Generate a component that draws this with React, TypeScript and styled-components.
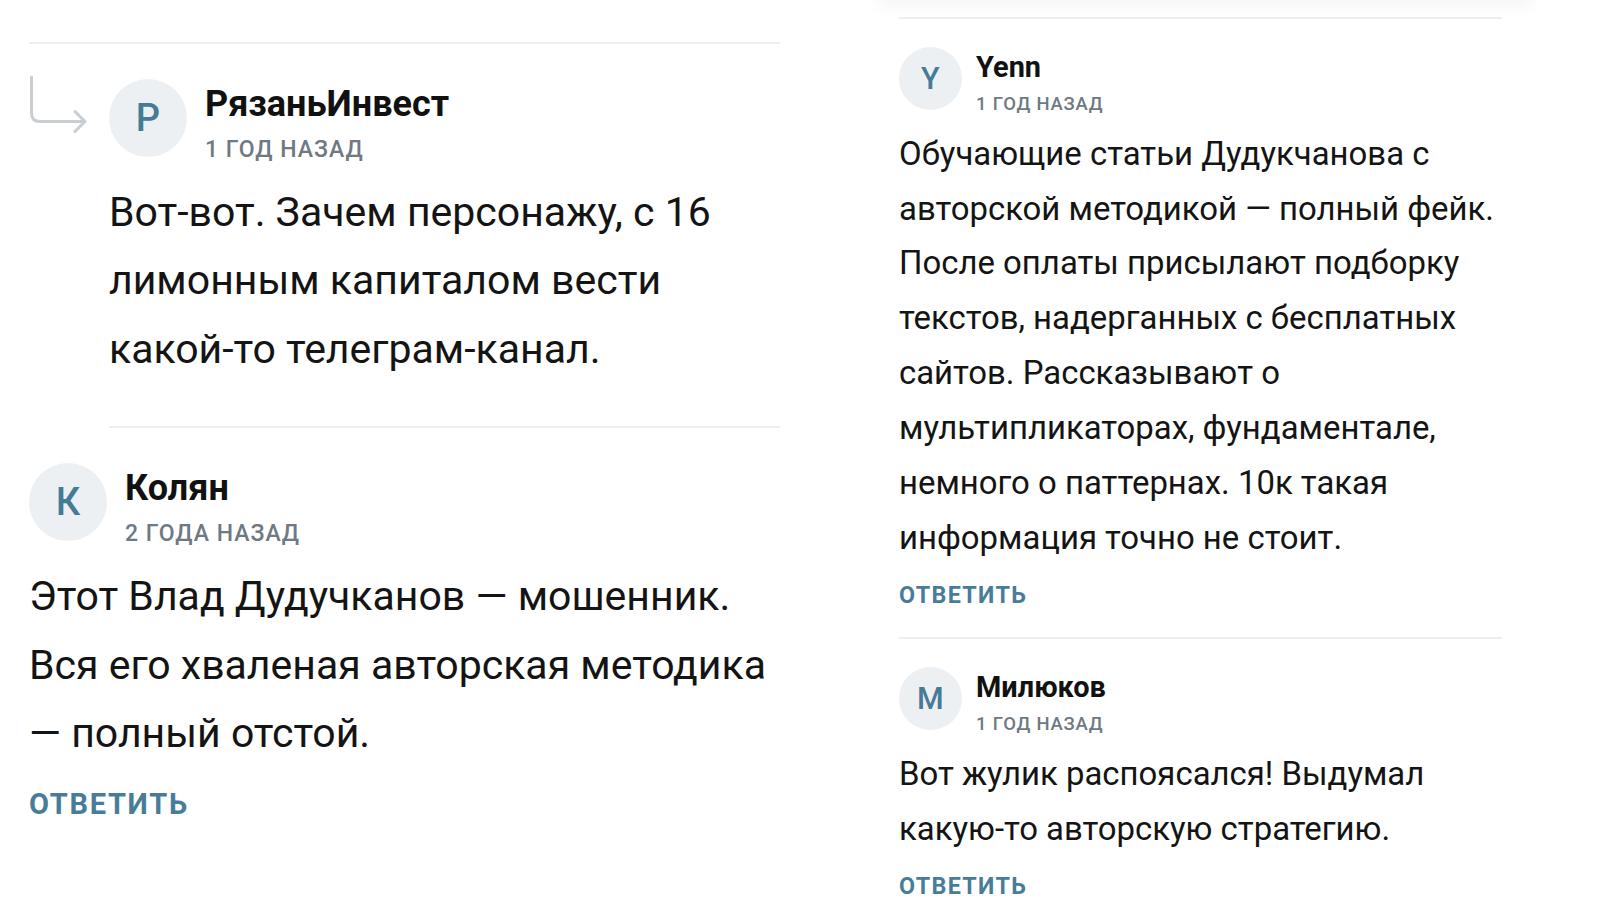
import React from "react";
import styled, { createGlobalStyle } from "styled-components";

const Global = createGlobalStyle`
  html, body { margin: 0; padding: 0; background: #ffffff; }
  body {
    font-family: Roboto, "Noto Sans", "Liberation Sans", sans-serif;
    color: #141414;
    -webkit-font-smoothing: antialiased;
  }
`;

const Page = styled.main`
  display: grid;
  grid-template-columns: 751px 603px;
  column-gap: 119px;
  padding-left: 29px;
  height: 900px;
  overflow: hidden;
`;

const Column = styled.section<{ $s: number; $top: number }>`
  --s: ${(p) => p.$s};
  display: flex;
  flex-direction: column;
  padding-top: ${(p) => p.$top}px;
  position: relative;
`;

const CardEdge = styled.div`
  position: absolute;
  left: -20px;
  right: -28px;
  top: -12px;
  height: 12px;
  background: #ffffff;
  box-shadow: 0 4px 16px rgba(40, 60, 80, 0.07);
`;

const Divider = styled.hr<{ $indent?: boolean }>`
  border: 0;
  margin: 0 0 0 ${(p) => (p.$indent ? "calc(80px * var(--s))" : "0")};
  height: 2px;
  background: #eceef1;
`;

const Comment = styled.article<{ $reply?: boolean }>`
  display: grid;
  grid-template-columns: ${(p) => (p.$reply ? "calc(80px * var(--s)) 1fr" : "1fr")};
  padding-top: calc(35px * var(--s));
  padding-bottom: calc(34px * var(--s));
`;

const ReplyArrow = styled.svg`
  width: calc(60px * var(--s));
  height: calc(60px * var(--s));
  margin-top: calc(-4px * var(--s));
`;

const Content = styled.div`
  display: flex;
  flex-direction: column;
  min-width: 0;
`;

const Header = styled.header`
  display: flex;
  align-items: flex-start;
  gap: calc(18px * var(--s));
`;

const Avatar = styled.div`
  flex: none;
  width: calc(78px * var(--s));
  height: calc(78px * var(--s));
  border-radius: 50%;
  background: #edf0f3;
  color: #467b96;
  display: flex;
  align-items: center;
  justify-content: center;
  font-size: calc(38px * var(--s));
  font-weight: 500;
`;

const Meta = styled.div`
  display: flex;
  flex-direction: column;
  padding-top: calc(3px * var(--s));
`;

const Name = styled.span`
  font-size: calc(36px * var(--s));
  line-height: calc(44px * var(--s));
  font-weight: 700;
  color: #111111;
`;

const Time = styled.span`
  margin-top: calc(9px * var(--s));
  font-size: calc(23px * var(--s));
  line-height: calc(30px * var(--s));
  font-weight: 500;
  letter-spacing: calc(1px * var(--s));
  text-transform: uppercase;
  color: #6e7982;
`;

const Body = styled.p`
  margin: calc(13px * var(--s)) 0 calc(9px * var(--s));
  font-size: calc(41px * var(--s));
  line-height: calc(68.4px * var(--s));
  font-weight: 400;
  color: #141414;
`;

const ReplyButton = styled.button`
  align-self: flex-start;
  margin-top: calc(10px * var(--s));
  padding: 0;
  border: 0;
  background: none;
  font-family: inherit;
  font-size: calc(29px * var(--s));
  line-height: calc(36px * var(--s));
  font-weight: 700;
  letter-spacing: calc(1.7px * var(--s));
  text-transform: uppercase;
  color: #477d99;
  cursor: pointer;
`;

type Item = {
  initial: string;
  name: string;
  time: string;
  text: string;
  reply?: boolean;
  canReply?: boolean;
};

const CommentView = ({ item }: { item: Item }) => (
  <Comment $reply={item.reply}>
    {item.reply && (
      <ReplyArrow viewBox="0 0 60 60" fill="none">
        <path
          d="M2.5 2 V38 Q2.5 46.5 11 46.5 H56 M46 36.5 L56 46.5 L46 56.5"
          stroke="#c9ced3"
          strokeWidth="3"
          strokeLinecap="round"
          strokeLinejoin="round"
        />
      </ReplyArrow>
    )}
    <Content>
      <Header>
        <Avatar>{item.initial}</Avatar>
        <Meta>
          <Name>{item.name}</Name>
          <Time>{item.time}</Time>
        </Meta>
      </Header>
      <Body>{item.text}</Body>
      {item.canReply && <ReplyButton type="button">Ответить</ReplyButton>}
    </Content>
  </Comment>
);

const left: Item[] = [
  {
    initial: "P",
    name: "РязаньИнвест",
    time: "1 год назад",
    text: "Вот-вот. Зачем персонажу, с 16 лимонным капиталом вести какой-то телеграм-канал.",
    reply: true,
  },
  {
    initial: "К",
    name: "Колян",
    time: "2 года назад",
    text: "Этот Влад Дудучканов — мошенник. Вся его хваленая авторская методика — полный отстой.",
    canReply: true,
  },
];

const right: Item[] = [
  {
    initial: "Y",
    name: "Yenn",
    time: "1 год назад",
    text: "Обучающие статьи Дудукчанова с авторской методикой — полный фейк. После оплаты присылают подборку текстов, надерганных с бесплатных сайтов. Рассказывают о мультипликаторах, фундаментале, немного о паттернах. 10к такая информация точно не стоит.",
    canReply: true,
  },
  {
    initial: "М",
    name: "Милюков",
    time: "1 год назад",
    text: "Вот жулик распоясался! Выдумал какую-то авторскую стратегию.",
    canReply: true,
  },
];

export default function App() {
  return (
    <>
      <Global />
      <Page>
        <Column $s={1} $top={42}>
          <Divider />
          <CommentView item={left[0]} />
          <Divider $indent />
          <CommentView item={left[1]} />
        </Column>
        <Column $s={0.803} $top={17}>
          <CardEdge />
          <Divider />
          <CommentView item={right[0]} />
          <Divider />
          <CommentView item={right[1]} />
        </Column>
      </Page>
    </>
  );
}
